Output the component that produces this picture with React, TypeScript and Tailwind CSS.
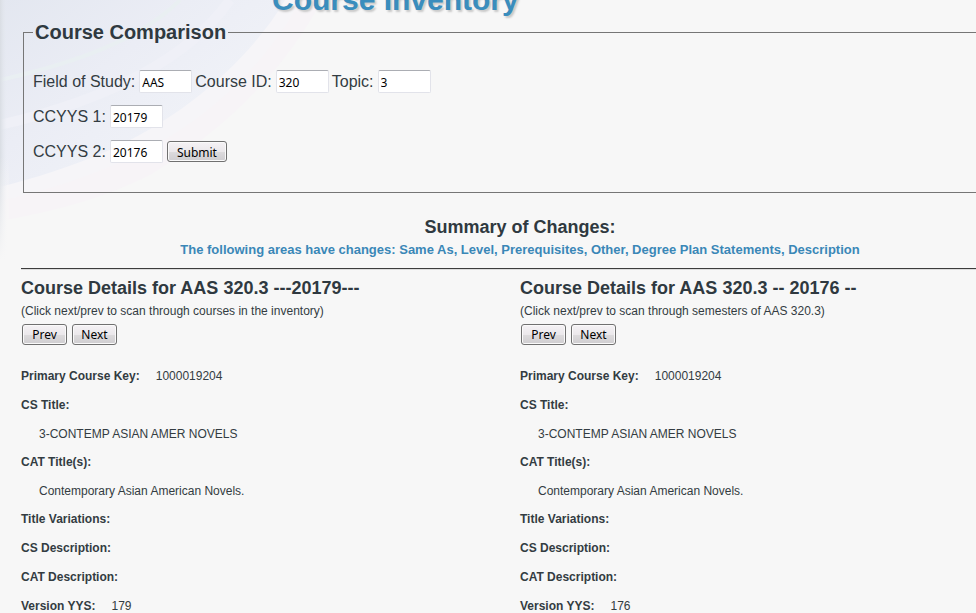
import React from "react";

type Row = { label: string; value?: string; block?: boolean };

const titleRows: Row[] = [
  { label: "CS Title:", value: "3-CONTEMP ASIAN AMER NOVELS", block: true },
  { label: "CAT Title(s):", value: "Contemporary Asian American Novels.", block: true },
  { label: "Title Variations:" },
  { label: "CS Description:" },
  { label: "CAT Description:" },
];

function rowsFor(version: string): Row[] {
  return [
    { label: "Primary Course Key:", value: "1000019204" },
    ...titleRows,
    { label: "Version YYS:", value: version },
  ];
}

function Field({ id, label, value }: { id: string; label: string; value: string }) {
  return (
    <div className="flex items-center gap-1">
      <label htmlFor={id}>{label}</label>
      <input
        id={id}
        type="text"
        defaultValue={value}
        className="h-[23px] w-[53px] rounded-xs border border-[#e2e3ea] border-t-[#abadb3] bg-white px-[2px] pt-[2px] font-['Noto_Sans',sans-serif] text-[12px] text-black"
      />
    </div>
  );
}

function PushButton({ children, wide }: { children: React.ReactNode; wide?: boolean }) {
  return (
    <button
      type="button"
      className={`${wide ? "w-[60px]" : "w-[45px]"} flex h-[21px] items-center justify-center rounded-[3px] border border-[#707070] bg-[linear-gradient(#f5f2f5_0%,#ebe8eb_50%,#dddbdd_51%,#cfcdd0_100%)] pt-px font-['Noto_Sans',sans-serif] text-[12px] text-black shadow-[inset_0_0_0_1px_#fafafa]`}
    >
      {children}
    </button>
  );
}

function CourseColumn({ title, hint, version }: { title: string; hint: string; version: string }) {
  return (
    <section className="min-w-0 pt-[6px]">
      <h2 className="text-[18px] leading-6 font-bold text-[#2f3940]">{title}</h2>
      <p className="text-[12px] leading-[22px]">{hint}</p>
      <div className="mt-[2px] flex gap-[5px] pl-px">
        <PushButton>Prev</PushButton>
        <PushButton>Next</PushButton>
      </div>
      <dl className="mt-[17px] text-[12px] leading-[29px]">
        {rowsFor(version).map((row) => (
          <div key={row.label} className={row.block ? "block" : "flex gap-4"}>
            <dt className="font-bold">{row.label}</dt>
            {row.value && (
              <dd className={row.block ? "pl-[18px] leading-7" : ""}>{row.value}</dd>
            )}
          </div>
        ))}
      </dl>
    </section>
  );
}

function Backdrop() {
  return (
    <svg className="absolute top-0 left-0 -z-10" width="340" height="260" viewBox="0 0 340 260" aria-hidden="true">
      <defs>
        <linearGradient id="sky" x1="0" y1="0" x2="1" y2="0.8">
          <stop offset="0" stopColor="#e3e7f0" />
          <stop offset="0.4" stopColor="#ebedf5" />
          <stop offset="0.7" stopColor="#eff1f7" />
          <stop offset="1" stopColor="#f3f4f8" />
        </linearGradient>
        <linearGradient id="edge" x1="0" y1="0" x2="1" y2="0">
          <stop offset="0" stopColor="#d9dde3" />
          <stop offset="1" stopColor="#e6eaf1" stopOpacity="0" />
        </linearGradient>
        <linearGradient id="fade" x1="0" y1="0" x2="0" y2="1">
          <stop offset="0.6" stopColor="#f7f7f7" stopOpacity="0" />
          <stop offset="1" stopColor="#f7f7f7" />
        </linearGradient>
      </defs>
      <path d="M0 0H322C285 70 225 130 150 175C100 200 50 212 0 221Z" fill="#f7f4f7" />
      <path d="M0 0H300C270 60 205 125 125 160C80 180 40 192 0 201Z" fill="#f6f5f8" />
      <path d="M0 0H285C255 52 190 115 105 152C70 167 35 178 0 187Z" fill="url(#sky)" />
      <path d="M180 0C140 40 75 63 0 80" fill="none" stroke="#e9eff2" strokeWidth="4" />
      <path d="M230 0C180 70 85 105 0 125" fill="none" stroke="#eff0f7" strokeWidth="10" />
      <rect width="7" height="260" fill="url(#edge)" />
      <rect width="9" height="260" fill="url(#fade)" />
    </svg>
  );
}

export default function App() {
  return (
    <div className="relative isolate h-screen overflow-hidden bg-[#f7f7f7] font-['Liberation_Sans',Arial,sans-serif] text-[#333c42]">
      <Backdrop />
      <main className="-mr-[43px] pl-[21px]">
        <h1 className="-mt-5 pl-[251px] text-[30px] leading-10 font-bold text-[#3a8dbd] text-shadow-[2px_2px_2px_#c8c8c8]">
          Course Inventory
        </h1>
        <form onSubmit={(e) => e.preventDefault()}>
          <fieldset className="mx-[2px] border border-[#767676] px-[9px] pb-[29px]">
            <legend className="px-[2px] text-[20px] leading-6 font-bold text-[#2f3940]">
              Course Comparison
            </legend>
            <div className="flex flex-col gap-3 pt-[26px] text-[16px] leading-[23px]">
              <div className="flex gap-[3px]">
                <Field id="field" label="Field of Study:" value="AAS" />
                <Field id="course" label="Course ID:" value="320" />
                <Field id="topic" label="Topic:" value="3" />
              </div>
              <Field id="ccyys1" label="CCYYS 1:" value="20179" />
              <div className="flex items-center gap-1">
                <Field id="ccyys2" label="CCYYS 2:" value="20176" />
                <PushButton wide>Submit</PushButton>
              </div>
            </div>
          </fieldset>
        </form>
        <header className="mt-[22px] border-b border-[#3c3c3c] pb-[7px] text-center">
          <h2 className="text-[18px] leading-6 font-bold text-[#2f3940]">Summary of Changes:</h2>
          <p className="text-[13px] leading-[22px] font-bold text-[#3a87b7]">
            The following areas have changes: Same As, Level, Prerequisites, Other, Degree Plan Statements, Description
          </p>
        </header>
        <div className="grid grid-cols-2 border-t border-[#dcdcdc]">
          <CourseColumn
            title="Course Details for AAS 320.3 ---20179---"
            hint="(Click next/prev to scan through courses in the inventory)"
            version="179"
          />
          <CourseColumn
            title="Course Details for AAS 320.3 -- 20176 --"
            hint="(Click next/prev to scan through semesters of AAS 320.3)"
            version="176"
          />
        </div>
      </main>
    </div>
  );
}
